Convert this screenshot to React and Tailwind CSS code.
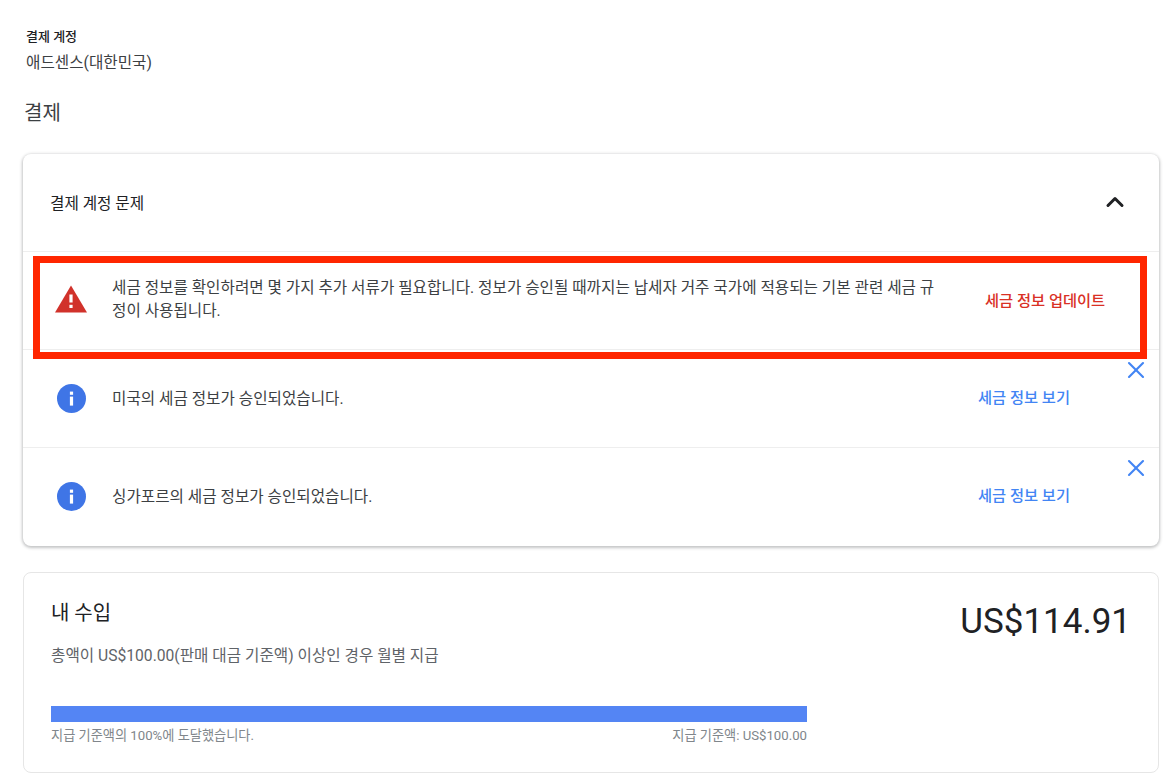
import { ChevronUp, X } from "lucide-react";

const fontStack = "font-['Roboto','Noto_Sans_CJK_KR',sans-serif]";

const WarningIcon = () => (
  <svg width="32" height="28" viewBox="0 0 32 28">
    <path d="M16 0.5 L32 27.5 L0 27.5 Z" fill="#d1322b" />
    <rect x="14.4" y="9.5" width="3.2" height="8" fill="#fff" />
    <rect x="14.4" y="19.8" width="3.2" height="3.2" fill="#fff" />
  </svg>
);

const InfoIcon = () => (
  <svg width="29" height="29" viewBox="0 0 29 29">
    <circle cx="14.5" cy="14.5" r="14.5" fill="#3f75e6" />
    <rect x="12.9" y="12.6" width="3.2" height="9" fill="#fff" />
    <rect x="12.9" y="7.6" width="3.2" height="3.2" fill="#fff" />
  </svg>
);

const InfoRow = ({ text }) => (
  <div className="relative flex h-[98px] items-center border-t border-[#eeeeee] pl-[34px]">
    <div className="w-[55px] shrink-0">
      <InfoIcon />
    </div>
    <p className="flex-1 text-[15.65px] text-[#3c4043]">{text}</p>
    <a className="mr-[89px] text-[15.3px] font-medium text-[#4285f4]">세금 정보 보기</a>
    <button className="absolute right-[9px] top-[6px] text-[#4285f4]">
      <X size={28} strokeWidth={1.8} />
    </button>
  </div>
);

export default function App() {
  return (
    <div className={`${fontStack} min-h-[781px] bg-white pl-[23px] pr-[6px] text-[#202124]`}>
      <div className="pl-[3px] pt-[29px]">
        <div className="text-[13px] leading-[16px] font-medium">결제 계정</div>
        <div className="mt-[6px] text-[15.65px] leading-[24px] text-[#3c4043]">애드센스(대한민국)</div>
      </div>
      <h1 className="mt-[22px] pl-px text-[20px] leading-[32px] font-normal text-[#3c4043]">결제</h1>

      <section className="relative mt-[25px] h-[392px] rounded-lg bg-white shadow-[0_1px_3px_1px_rgba(60,64,67,0.3)]">
        <div className="flex h-[97px] items-center justify-between pb-[1px] pl-[27px] pr-[30px]">
          <span className="pt-[3px] text-[15.65px]">결제 계정 문제</span>
          <ChevronUp size={28} strokeWidth={2.6} />
        </div>

        <div className="flex h-[98px] items-start border-t border-[#eeeeee] pl-[32px] pt-[24px]">
          <div className="w-[57px] shrink-0 pt-[9px]">
            <WarningIcon />
          </div>
          <p className="w-[826px] shrink-0 text-[15.65px] leading-[23px] text-[#3c4043]">
            세금 정보를 확인하려면 몇 가지 추가 서류가 필요합니다. 정보가 승인될 때까지는 납세자 거주 국가에 적용되는 기본 관련 세금 규정이 사용됩니다.
          </p>
          <a className="ml-[47px] pt-[14px] text-[15.3px] font-medium text-[#d93025]">세금 정보 업데이트</a>
        </div>

        <InfoRow text="미국의 세금 정보가 승인되었습니다." />
        <InfoRow text="싱가포르의 세금 정보가 승인되었습니다." />

        {/* red highlight drawn over the first row */}
        <div className="absolute left-[10px] top-[102px] h-[103px] w-[1114px] border-[7px] border-[#ff2600]" />
      </section>

      <section className="mt-[26px] h-[201px] rounded-lg border border-[#e6e6e6] bg-white pl-[27px] pr-[27px]">
        <div className="flex items-start justify-between pt-[26px]">
          <div>
            <h2 className="text-[20px] leading-[28px] font-normal text-[#202124]">내 수입</h2>
            <p className="mt-[19px] text-[15.65px] leading-[20px] text-[#5f6368]">
              총액이 US$100.00(판매 대금 기준액) 이상인 경우 월별 지급
            </p>
          </div>
          <div className="-mt-px text-[35px] leading-[48px] text-[#202124]">US$114.91</div>
        </div>
        <div className="mt-[40px] w-[756px]">
          <div className="h-4 bg-[#5485f4]" />
          <div className="mt-[4px] flex justify-between text-[13.2px] leading-[20px] text-[#80868b]">
            <span>지급 기준액의 100%에 도달했습니다.</span>
            <span>지급 기준액: US$100.00</span>
          </div>
        </div>
      </section>
    </div>
  );
}
